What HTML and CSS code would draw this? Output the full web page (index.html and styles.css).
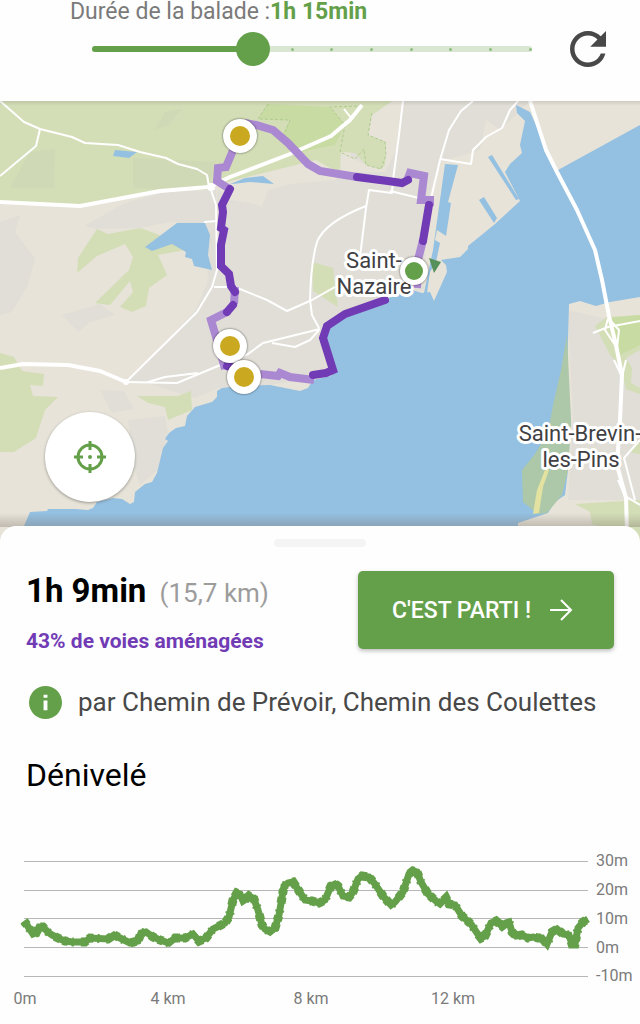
FILE: index.html
```html
<!DOCTYPE html>
<html lang="fr">
<head>
  <meta charset="UTF-8" />
  <meta name="viewport" content="width=device-width, initial-scale=1.0"/>
  <title>Balade à vélo</title>
  <link rel="stylesheet" href="styles.css">
</head>
<body>

<header class="topbar">
  <label class="duration-label" for="duration">Durée de la balade :<strong>1h 15min</strong></label>
  <div class="duration-row">
    <div class="slider">
      <div class="slider-track">
        <span class="slider-fill" style="width: 36%;"></span>
        <i></i><i></i><i></i><i></i><i></i><i></i><i></i><i></i><i></i><i></i><i></i><i></i>
      </div>
      <input type="range" id="duration" min="0" max="11" step="1" value="4">
    </div>
    <button class="refresh-button" aria-label="Recalculer">
      <svg viewBox="0 0 24 24"><path d="M17.65 6.35C16.2 4.9 14.21 4 12 4c-4.42 0-7.99 3.58-7.99 8s3.57 8 7.99 8c3.73 0 6.84-2.55 7.73-6h-2.08c-.82 2.33-3.04 4-5.65 4-3.31 0-6-2.69-6-6s2.69-6 6-6c1.66 0 3.14.69 4.22 1.78L13 11h7V4l-2.35 2.35z"/></svg>
    </button>
  </div>
</header>

<div class="map">
  <svg class="map-canvas" viewBox="0 101 640 441" preserveAspectRatio="xMidYMin slice">
    <rect class="land" x="0" y="101" width="640" height="441"/>

    <!-- built-up areas -->
    <g class="urban">
      <path d="M84 226L125 203 165 192 216 190 216 285 198 310 192 340 150 378 128 382 168 368 200 300 208 280 205 225 170 222 140 228 97 229z"/>
      <path d="M217 190L262 205 267 186 335 180 382 101 530 101 500 130 486 120 480 150 440 162 427 200 424 290 383 300 327 325 330 375 270 385 218 388 195 398 150 384 128 382 205 300 216 270z"/>
      <path d="M0 222L20 215 15 232 35 258 28 285 12 312 0 315z"/>
      <path d="M62 315L100 304 115 315 90 322 78 332z"/>
      <path d="M100 390L124 391 134 409 112 413zM128 420L165 416 168 433 160 468 140 485 132 460z"/>
      <path d="M568 310L620 322 640 318 640 500 568 500 573 420z"/>
    </g>
    <path class="land" d="M232 190L267 178 290 184 268 190 262 207 252 203 230 200zM393 101L404 101 396 150 385 172 340 172 341 152 355 159 366 165 381 169 386 155 386 142 368 135 372 115z"/>

    <!-- parks and marshes -->
    <g class="green">
      <path d="M0 101L392 101 372 115 368 135 386 142 385 165 381 169 366 165 355 153 341 152 340 172 330 168 316 160 215 185 160 191 80 205 0 202z"/>
      <path d="M97 229L108 234 140 228 157 234 185 250 158 255 167 275 149 288 146 306 132 312 120 307 133 292 130 281 110 305 95 303 129 270 133 257 125 244 97 256 77 273 78 258z"/>
      <path d="M0 353L14 357 22 371 44 374 43 386 30 385 33 396 58 397 45 410 36 438 14 452 0 452z"/>
      <path d="M137 396L178 396 191 391 192 410 168 420 165 407 148 403z"/>
      <path d="M312 262L333 268 338 307 313 291z"/>
      <path d="M595 326L607 317 640 315 640 350 626 358 632 368 631 383 640 388 640 394 626 389 620 365 610 355z"/>
      <path d="M575 504L640 500 640 542 592 524 590 512z"/>
      <path d="M628 452L640 440 640 454z"/>
    </g>
    <g class="green-dark">
      <path d="M268 104L330 107 345 125 335 145 300 152 280 140 290 120 258 119z"/>
      <path d="M606 318L640 315 640 345 620 355z"/>
    </g>
    <g class="marsh">
      <path d="M10 188L30 152 55 149 54 176 55 188zM133 158L216 162 208 190 160 190 133 187zM155 130L165 112 182 109 168 125z"/>
    </g>
    <path class="park-edge" d="M268 104L258 119 290 120 282 140M362 106L330 107 345 125 340 152 355 159 364 149 366 165 381 169 386 155 385 142 368 135 372 112"/>

    <!-- sea, estuary and docks -->
    <g class="water">
      <path d="M24 542L24 526 30 512 47 511 48 509 75 509 88 510 93 508 97 502 113 498 122 499 130 504 134 502 135 492 145 484 152 482 157 473 163 448 168 441 165 439 169 433 176 428 185 426 187 416 195 407 212 402 217 397 217 391 222 388 240 386 270 385 300 391 308 388 313 380 331 376 335 370 323 335 330 322 347 312 383 300 412 290 422 293 430 292 434 301 447 272 446 265 441 260 460 257 468 249 468 246 495 224 520 201 505 172 510 164 522 153 520 145 525 121 517 113 516 105 530 112 537 127 546 150 558 170 640 125 640 297 610 302 596 306 580 301 569 304 568 340 567 380 571 420 568 470 565 495 555 502 548 513 536 517 518 523 518 542z"/>
      <path d="M445 164L458 165 448 202 451 203 446 236 437 230 435 240 440 243 436 262 430 272 427 293 424 293 433 250z"/>
      <path d="M488 157L492 155 519 199 516 200zM479 200L484 197 497 218 494 223z"/>
      <path d="M115 150L137 152 129 158 113 156zM145 247L177 223 205 223 210 235 208 255 212 270 194 266 192 259 185 257 186 252 172 244 152 251z"/>
      <path d="M228 185L245 178 263 176 274 184 250 182 232 184z"/>
    </g>
    <path class="marsh-coast" d="M567 335L571 420 568 470 562 495 547 513 538 514 523 502 522 470 535 454 548 433 553 405 561 370z"/>
    <path class="sandbank" d="M545 470L549 470 543 487 539 513 533 514 537 490z"/>
    <path class="pier" d="M429 258L441 262 434 273z"/>

    <!-- roads -->
    <g class="road">
      <path d="M0 101L24 122 40 129 72 137 85 143 118 145 140 152 166 158 178 164 197 169 207 175 209 187"/>
      <path d="M40 129L36 146 0 176"/>
      <path class="wide" d="M0 202L80 206 160 191 209 187 230 177 290 154 331 136 350 120 362 105"/>
      <path d="M344 109L352 119"/>
      <path d="M210 187L216 205 217 270 212 287 197 312 126 382"/>
      <path d="M204 222L217 221M214 287L235 287 267 300 287 311 312 300 335 287"/>
      <path d="M403 101L399 135 393 180 392 193 369 190 366 208 360 257"/>
      <path d="M366 206Q325 222 317 242 311 262 310 300L312 315 319 328"/>
      <path d="M390 191L419 198M473 101L461 111 449 130 440 160 430 203"/>
      <path d="M440 159L471 164 473 150 486 137 502 128 510 110 518 101"/>
      <path class="wide" d="M0 368L23 364 68 365 100 371 126 382"/>
      <path d="M126 382L177 383 218 366 248 354 263 343 320 329M148 382L165 377 198 373M272 343L295 347 310 340 319 330"/>
      <path class="wide" d="M530 101L546 150 557 172 577 210 595 250 602 280 609 316 616 345 622 375 620 420 617 465 626 498 627 530"/>
      <path d="M593 333L608 327 640 321M608 318L605 330 617 348 619 330 610 320M614 360L622 377 626 360M640 440L624 458 635 500M618 480L625 496 640 505"/>
    </g>
    <circle class="junction" cx="211" cy="187" r="4"/>
    <circle class="junction" cx="126" cy="382" r="3"/>

    <!-- itinerary -->
    <g class="route route-shared">
      <path d="M245 123L256 125 273 130 288 143 308 164 320 171 357 177"/>
      <path d="M234 148L226 167 218 168 217 181 231 190"/>
      <path d="M407 181L410 173 424 176 421 200 430 200 430 206"/>
      <path d="M423 240L418 260 417 288"/>
      <path d="M314 380L290 377 280 373 278 376 260 374"/>
      <path d="M235 287L234 304M229 311L211 320 217 340 225 369"/>
    </g>
    <g class="route route-cycleway">
      <path d="M357 177L388 181 402 183 408 180"/>
      <path d="M429 205L423 241"/>
      <path d="M385 300L345 314 327 326 323 338 333 370 326 373 313 375"/>
      <path d="M230 189L222 205 223 212 221 228 224 230 221 245 221 266 229 274 231 286 235 292"/>
      <path d="M233 305L227 312M227 366L235 368"/>
    </g>

    <g class="place">
      <text x="374" y="268">Saint-</text>
      <text x="374" y="294">Nazaire</text>
      <text x="580" y="441">Saint-Brevin-</text>
      <text x="581" y="467">les-Pins</text>
    </g>

    <g class="pin">
      <circle cx="240" cy="136" r="17"/><circle class="pin-step" cx="240" cy="136" r="10"/>
      <circle cx="230" cy="346" r="17"/><circle class="pin-step" cx="230" cy="346" r="10"/>
      <circle cx="244" cy="377" r="17"/><circle class="pin-step" cx="244" cy="377" r="10"/>
      <circle cx="414" cy="271" r="14"/><circle class="pin-start" cx="414" cy="271" r="9"/>
    </g>
  </svg>

  <button class="locate-button" aria-label="Me localiser">
    <svg viewBox="0 0 32 32">
      <circle cx="16" cy="16" r="12"/>
      <path d="M16 0v9M16 23v9M0 16h9M23 16h9"/>
      <circle class="locate-dot" cx="16" cy="16" r="2"/>
    </svg>
  </button>
</div>

<main class="sheet">
  <div class="sheet-handle"></div>

  <section class="summary">
    <div>
      <h1>1h 9min <small>(15,7 km)</small></h1>
      <p class="cycleways">43% de voies aménagées</p>
    </div>
    <button class="go-button">
      C'EST PARTI !
      <svg viewBox="0 0 24 24"><path d="M1 12h21M12 2l10 10-10 10"/></svg>
    </button>
  </section>

  <p class="via">
    <svg viewBox="0 0 34 34"><circle cx="17" cy="17" r="17"/><path d="M15 9h4v3h-4zM15 15h4v10h-4z"/></svg>
    par Chemin de Prévoir, Chemin des Coulettes
  </p>

  <h2>Dénivelé</h2>
  <svg class="elevation" viewBox="0 0 640 174">
    <defs>
      <path id="profile" d="M24 71L27 75 33 84 36 83 39 77 43 77 48 82 52 85 60 89 65 91 73 92 85 92 90 88 108 89 114 85 120 88 130 93 138 91 141 83 146 82 153 87 160 90 169 93 175 88 185 88 193 84 199 91 206 88 213 79 225 73 229 67 233 50 237 43 240 44 243 51 246 49 249 46 254 49 258 60 262 75 265 79 270 82 275 78 279 65 284 36 288 33 293 32 297 38 305 50 312 51 319 53 325 50 331 36 335 34 338 36 343 46 349 47 353 42 358 29 362 26 369 27 375 34 383 46 391 55 395 52 403 42 409 24 413 21 417 22 421 32 428 44 436 51 440 54 446 48 449 54 455 55 462 66 471 74 477 83 481 88 485 86 491 73 496 71 502 76 506 73 509 72 512 82 516 86 522 85 528 88 533 87 538 88 542 88 547 94 552 82 557 79 563 84 569 85 572 94 575 94 578 78 583 72 588 69"/>
    </defs>
    <path class="grid" d="M24 11.500H588M24 40.500H588M24 68.500H588M24 97.500H588M24 126.500H588"/>
    <use class="profile" href="#profile"/>
    <use class="profile profile-samples" href="#profile"/>
    <g class="axis">
      <text x="596" y="16">30m</text>
      <text x="596" y="45">20m</text>
      <text x="596" y="74">10m</text>
      <text x="596" y="103">0m</text>
      <text x="596" y="131">-10m</text>
      <text class="axis-x" x="25" y="154">0m</text>
      <text class="axis-x" x="168" y="154">4 km</text>
      <text class="axis-x" x="311" y="154">8 km</text>
      <text class="axis-x" x="453" y="154">12 km</text>
    </g>
  </svg>
</main>

</body>
</html>
```
FILE: styles.css
```css
body { margin: 0; font-family: Roboto, sans-serif; background: #fefefe; color: #000; }
button { border: none; padding: 0; font-family: inherit; cursor: pointer; }
svg { display: block; }

.topbar { height: 101px; background: #fefefe; }

.duration-label { display: block; height: 22px; padding-left: 70px; font-size: 23px; line-height: 24px; color: #7a7a7a; }
.duration-label strong { color: #64a04a; }

.duration-row { display: flex; align-items: center; padding: 0 25px 0 77px; }

.slider { flex: 1; display: grid; align-items: center; }
.slider > * { grid-area: 1 / 1; }

.slider-track {
  position: relative;
  display: flex;
  justify-content: space-between;
  align-items: center;
  height: 6px;
  margin: 0 15px;
  border-radius: 3px;
  background: #d9e7d2;
}

.slider-track i { width: 3px; height: 3px; border-radius: 50%; background: #8fbc80; }
.slider-fill { position: absolute; left: 0; height: 6px; border-radius: 3px; background: #64a04a; }

.slider input { position: relative; width: 100%; height: 34px; margin: 0; background: none; appearance: none; }
.slider input::-webkit-slider-thumb {
  appearance: none;
  width: 34px;
  height: 34px;
  border-radius: 50%;
  background: #64a04a;
}

.refresh-button { margin-left: 14px; background: none; }
.refresh-button svg { width: 54px; height: 54px; fill: #484848; }

/* map */
.map { position: relative; }
.map::before {
  content: "";
  position: absolute;
  inset: 0 0 15px;
  background:
    linear-gradient(rgba(0,0,0,0.1), transparent 5px),
    linear-gradient(to top, rgba(120,110,100,0.35), transparent 14px);
}
.map-canvas { width: 100%; }

.land { fill: #e7e3d8; }
.urban { fill: #e0ded7; }
.green { fill: #d3deb7; }
.green-dark { fill: #c8dba3; }
.marsh { fill: #d0d9b6; }
.marsh-coast { fill: #adc8a9; }
.sandbank { fill: #e3e2a0; }
.water { fill: #94c0e1; }
.pier { fill: #56905a; }
.junction { fill: #fff; }
.park-edge { fill: none; stroke: #aecb8d; stroke-dasharray: 3 2; }

.road { fill: none; stroke: #fff; stroke-width: 2; stroke-linejoin: round; }
.road .wide { stroke-width: 4; }

.route { fill: none; stroke-width: 8; }
.route-shared { stroke: #ab88d2; }
.route-cycleway { stroke: #713bb5; stroke-linecap: round; }

.place text {
  font-size: 22px;
  text-anchor: middle;
  fill: #3f3f44;
  stroke: #fff;
  stroke-width: 6px;
  stroke-linejoin: round;
  paint-order: stroke;
}

.pin circle { fill: #fff; filter: drop-shadow(0 0 1px rgba(0,0,0,0.6)); }
.pin .pin-step { fill: #caa81f; filter: none; }
.pin .pin-start { fill: #64a04a; filter: none; }

.locate-button {
  position: absolute;
  left: 45px;
  bottom: 40px;
  display: flex;
  align-items: center;
  justify-content: center;
  width: 90px;
  height: 90px;
  border-radius: 50%;
  background: #fff;
  box-shadow: 0 1px 3px rgba(0,0,0,0.35);
}

.locate-button svg { width: 32px; height: 32px; fill: none; stroke: #64a04a; stroke-width: 3; }
.locate-button .locate-dot { fill: #64a04a; stroke: none; }

/* bottom sheet */
.sheet { position: relative; margin-top: -16px; padding-top: 13px; border-radius: 16px 16px 0 0; background: #fefefe; }
.sheet-handle { width: 92px; height: 8px; margin: 0 auto; border-radius: 4px; background: #f4f4f4; }

.summary { display: flex; justify-content: space-between; padding: 24px 26px 0; }
.summary h1 { margin: 0; font-size: 33px; line-height: 40px; font-weight: bold; }
.summary small { margin-left: 5px; font-size: 26px; font-weight: normal; color: #9c9c9c; }
.cycleways { margin: 16px 0 0; font-size: 21px; line-height: 24px; font-weight: bold; color: #713bb5; }

.go-button {
  display: flex;
  align-items: center;
  justify-content: center;
  gap: 18px;
  width: 256px;
  height: 78px;
  padding-right: 7px;
  border-radius: 5px;
  background: #64a04a;
  box-shadow: 0 2px 4px rgba(0,0,0,0.25);
  color: #fff;
  font-size: 23px;
  font-weight: 500;
}

.go-button svg { width: 24px; height: 24px; fill: none; stroke: #fff; stroke-width: 2; }

.via { display: flex; align-items: center; gap: 16px; margin: 32px 29px 0; font-size: 26px; line-height: 34px; color: #484848; }
.via svg { flex: none; width: 33px; height: 33px; fill: #64a04a; }
.via path { fill: #fff; }

h2 { margin: 36px 26px 0; font-size: 32px; line-height: 40px; font-weight: normal; }

.elevation { width: 100%; margin-top: 55px; }
.grid { stroke: #b7b7b7; }
.profile { fill: none; stroke: #64a04a; stroke-width: 7; }
.profile-samples { stroke-width: 9; stroke-dasharray: 5 4 2 7 6 3; }
.axis { font-size: 16px; fill: #7a7a7a; }
.axis-x { text-anchor: middle; }
```
